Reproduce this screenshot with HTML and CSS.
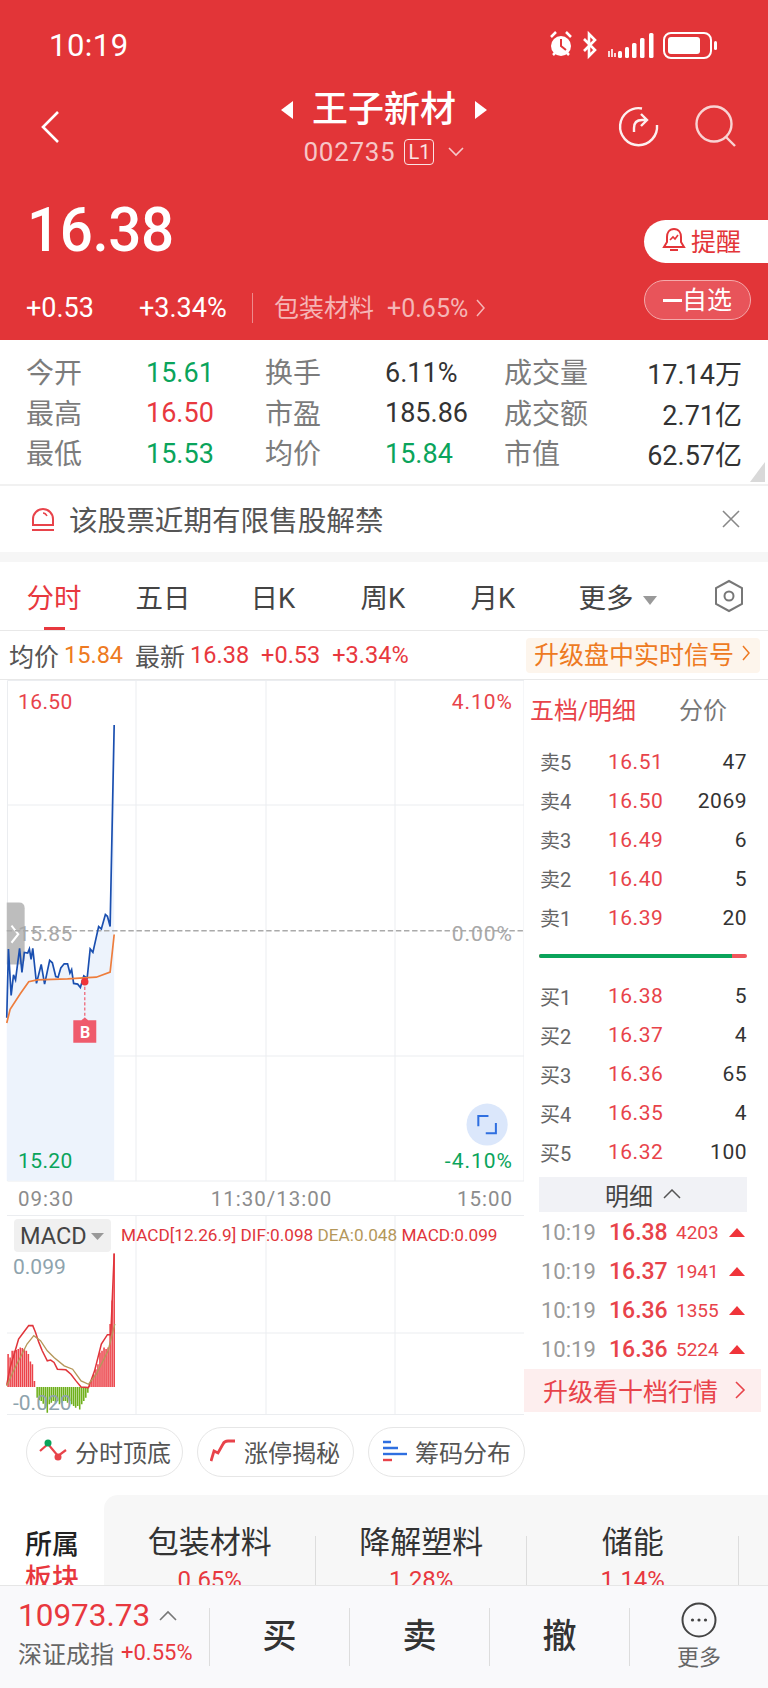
FILE: index.html
```html
<!DOCTYPE html>
<html lang="zh-CN">
<head>
    <meta charset="UTF-8">
    <title>王子新材</title>
    <link rel="stylesheet" href="styles.css">
</head>
<body>
<div class="page">
    <header class="hero">
        <div class="status">
            <span class="status-time">10:19</span>
            <svg class="status-icons" width="172" height="32" viewBox="0 0 172 32">
                <circle cx="12" cy="17" r="10" fill="#fff"/>
                <path d="M12 10v7l5 4" fill="none" stroke="#e33539" stroke-width="2"/>
                <path d="M2 8l5-5M22 8l-5-5M4 26l3-3M20 26l-3-3" stroke="#fff" stroke-width="2.5" fill="none"/>
                <path d="M35 10l11 11-6 6V5l6 6-11 11" fill="none" stroke="#fff" stroke-width="2.6"/>
                <path d="M60 22v6M63 20v8M66 24v4" stroke="#fff" stroke-width="1.6"/>
                <rect x="69" y="22" width="4" height="7" rx="1.5" fill="#fff"/>
                <rect x="76" y="18" width="4" height="11" rx="1.5" fill="#fff"/>
                <rect x="83" y="14" width="4.5" height="15" rx="1.5" fill="#fff"/>
                <rect x="91" y="9" width="4.5" height="20" rx="1.5" fill="#fff"/>
                <rect x="100" y="4" width="4.5" height="25" rx="1.5" fill="#fff"/>
                <rect x="115" y="4" width="47" height="25" rx="7" fill="none" stroke="#fff" stroke-width="2"/>
                <rect x="119" y="8" width="32" height="17" rx="3" fill="#fff"/>
                <rect x="165" y="12" width="3" height="9" rx="1.5" fill="#fff"/>
            </svg>
        </div>
        <nav class="nav">
            <svg class="back" width="20" height="34" viewBox="0 0 20 34"><path d="M18 2L3 17l15 15" fill="none" stroke="#fff" stroke-width="2.6"/></svg>
            <div class="title">
                <div class="title-name"><i class="arrow-left"></i><span>王子新材</span><i class="arrow-right"></i></div>
                <div class="title-code">
                    <span>002735</span><b class="level">L1</b>
                    <svg width="16" height="10" viewBox="0 0 16 10"><path d="M1 1l7 7 7-7" fill="none" stroke="#f5c9ca" stroke-width="1.6"/></svg>
                </div>
            </div>
            <div class="nav-icons">
                <svg width="44" height="44" viewBox="0 0 44 44">
                    <path d="M25 3.5A18.5 18.5 0 1 0 40 20" fill="none" stroke="#fdf0f0" stroke-width="2.4"/>
                    <path d="M17 27v-4c0-5 3-8 8-8h4M24 9l6 6-6 6" fill="none" stroke="#fdf0f0" stroke-width="2.4"/>
                </svg>
                <svg width="44" height="44" viewBox="0 0 44 44">
                    <circle cx="20" cy="19" r="17.5" fill="none" stroke="#f9d3d3" stroke-width="2.4"/>
                    <path d="M32 32l9 9" stroke="#f9d3d3" stroke-width="2.4"/>
                </svg>
            </div>
        </nav>
        <div class="quote">
            <div class="quote-main">
                <div class="price">16.38</div>
                <div class="change">
                    <span class="change-a">+0.53</span>
                    <span class="change-b">+3.34%</span>
                    <span class="sector-name">包装材料</span>
                    <span class="sector-pct">+0.65%</span>
                    <svg width="10" height="18" viewBox="0 0 10 18"><path d="M1 1l7 8-7 8" fill="none" stroke="#f5b5b6" stroke-width="1.5"/></svg>
                </div>
            </div>
            <div class="quote-side">
                <div class="pill-alert">
                    <svg width="24" height="26" viewBox="0 0 24 26">
                        <path d="M12 2c5 0 7 4 7 8v5l3 5H2l3-5v-5c0-4 2-8 7-8zM8 23h8" fill="none" stroke="#e33539" stroke-width="2"/>
                        <path d="M8 13l3-3 2 2 3-4" fill="none" stroke="#e33539" stroke-width="1.6"/>
                    </svg>
                    <span>提醒</span>
                </div>
                <div class="pill-add"><i></i><span>自选</span></div>
            </div>
        </div>
    </header>

    <section class="stats">
        <span class="k">今开</span><span class="v green">15.61</span><span class="k">换手</span><span class="v">6.11%</span><span class="k">成交量</span><span class="v end">17.14万</span>
        <span class="k">最高</span><span class="v red">16.50</span><span class="k">市盈</span><span class="v">185.86</span><span class="k">成交额</span><span class="v end">2.71亿</span>
        <span class="k">最低</span><span class="v green">15.53</span><span class="k">均价</span><span class="v green">15.84</span><span class="k">市值</span><span class="v end">62.57亿</span>
        <i class="stats-corner"></i>
    </section>

    <section class="notice">
        <svg width="26" height="26" viewBox="0 0 26 26">
            <path d="M3 19v-6a10 10 0 0 1 20 0v6zM2 24h22" fill="none" stroke="#e8434a" stroke-width="2"/>
            <path d="M13 7c2 0 3 1 4 3" fill="none" stroke="#e8434a" stroke-width="1.5"/>
        </svg>
        <span class="notice-text">该股票近期有限售股解禁</span>
        <svg class="notice-close" width="18" height="18" viewBox="0 0 18 18"><path d="M1 1l16 16M17 1L1 17" stroke="#888" stroke-width="1.6"/></svg>
    </section>

    <div class="band"></div>

    <section class="tabs">
        <span class="tab on">分时</span>
        <span class="tab">五日</span>
        <span class="tab">日K</span>
        <span class="tab">周K</span>
        <span class="tab">月K</span>
        <span class="tab tab-more">更多<i></i></span>
        <svg class="tab-gear" width="30" height="34" viewBox="0 0 30 34">
            <path d="M15 2l13 7v16l-13 7-13-7V9z" fill="none" stroke="#777" stroke-width="2"/>
            <circle cx="15" cy="17" r="4.5" fill="none" stroke="#777" stroke-width="2"/>
        </svg>
    </section>

    <section class="info">
        <span class="info-k">均价</span><span class="info-orange">15.84</span>
        <span class="info-k">最新</span><span class="info-red">16.38</span>
        <span class="info-red">+0.53</span><span class="info-red">+3.34%</span>
        <span class="info-badge">升级盘中实时信号<svg width="9" height="18" viewBox="0 0 9 18"><path d="M1 2l6 7-6 7" fill="none" stroke="#ee7a22" stroke-width="1.5"/></svg></span>
    </section>

    <section class="board">
        <div class="board-left">
            <svg class="price-chart" width="524" height="502" viewBox="0 0 524 502">
                <path d="M7.5 .5H524V501H7.5zM136 0v501M266 0v501M395 0v501M7 125h517M7 376h517" fill="none" stroke="#ebedf0" stroke-width="1"/>
                <g transform="translate(0 -10) scale(.3378 .3444)">
                    <path d="M20 1010L25 810 33 945 40 885 46 900 58 808 65 878 72 820 82 822 87 810 92 840 97 808 108 910 122 855 132 912 147 843 155 850 165 890 172 892 180 865 190 853 200 853 207 880 212 870 218 910 230 912 238 922 248 888 258 895 267 810 275 820 292 745 300 752 312 710 318 715 326 745 338 160V1483H20z" fill="#edf3fc"/>
                    <path d="M20 675h36q17 0 17 17v146q0 17-17 17H20z" fill="#bdbdbd"/>
                    <path d="M34 742l20 25-20 25" fill="none" stroke="#fff" stroke-width="6"/>
                    <path d="M20 757H1550" stroke="#aaa" stroke-width="4" stroke-dasharray="16 8" fill="none"/>
                    <path d="M20 1010L25 810 33 945 40 885 46 900 58 808 65 878 72 820 82 822 87 810 92 840 97 808 108 910 122 855 132 912 147 843 155 850 165 890 172 892 180 865 190 853 200 853 207 880 212 870 218 910 230 912 238 922 248 888 258 895 267 810 275 820 292 745 300 752 312 710 318 715 326 745 338 160" fill="none" stroke="#1a4fb0" stroke-width="5"/>
                    <path d="M20 1025L30 985 60 940 85 905 110 900 200 897 260 893 285 892 326 877 338 768" fill="none" stroke="#ee7d3c" stroke-width="5"/>
                    <path d="M251 905V1015" stroke="#ef5b6c" stroke-width="3.5" stroke-dasharray="9 6"/>
                    <circle cx="251" cy="905" r="11" fill="#f0343a"/>
                    <path d="M217 1017h24l10-8 10 8h24v65h-68z" fill="#ef5b6c"/>
                    <circle cx="1442" cy="1320" r="61" fill="#dbe7fb"/>
                    <path d="M1416 1325v-30h30M1468 1315v30h-30" fill="none" stroke="#2f6fe0" stroke-width="6"/>
                </g>
                <text x="85" y="358" class="chart-b" text-anchor="middle">B</text>
                <text x="18" y="29" class="chart-num red-fill">16.50</text>
                <text x="513" y="29" class="chart-pct red-fill" text-anchor="end">4.10%</text>
                <text x="18" y="261" class="chart-num gray-fill">15.85</text>
                <text x="513" y="261" class="chart-pct gray-fill" text-anchor="end">0.00%</text>
                <text x="18" y="488" class="chart-num green-fill">15.20</text>
                <text x="513" y="488" class="chart-pct green-fill" text-anchor="end">-4.10%</text>
            </svg>
            <div class="axis"><span>09:30</span><span class="axis-mid">11:30/13:00</span><span>15:00</span></div>
            <svg class="macd" width="524" height="200" viewBox="0 0 524 200">
                <path d="M7 .5H524M7 199.5H524M136 0v199M266 0v199M395 0v199M7 118h517" fill="none" stroke="#ebedf0" stroke-width="1"/>
                <rect x="14" y="4" width="97" height="33" rx="4" fill="#f0f0f0"/>
                <text x="20" y="29" class="macd-name">MACD</text>
                <path d="M91 18h13l-6.500 7z" fill="#999"/>
                <text x="121" y="26" class="macd-legend"><tspan fill="#e0353b">MACD[12.26.9] DIF:0.098 </tspan><tspan fill="#b5975a">DEA:0.048 </tspan><tspan fill="#e0353b">MACD:0.099</tspan></text>
                <text x="13" y="59" class="macd-num">0.099</text>
                <g transform="translate(0 -15) scale(.3378 .335)">
                    <path d="M24 558V460M30 558V470M36 558V450M42 558V450M48 558V448M54 558V445M60 558V440M66 558V442M72 558V445M78 558V450M84 558V460M90 558V482M96 558V490M102 558V540M266 558V550M272 558V535M278 558V520M284 558V505M290 558V490M296 558V455M302 558V450M308 558V440M314 558V445M320 558V440M326 558V370M332 558V300M338 558V160" stroke="#ec4249" stroke-width="4.600" fill="none"/>
                    <path d="M110 558V590M116 558V598M122 558V600M128 558V608M134 558V620M140 558V635M146 558V610M152 558V605M158 558V600M164 558V605M170 558V600M176 558V610M182 558V605M188 558V600M194 558V600M200 558V605M206 558V600M212 558V610M218 558V615M224 558V620M230 558V615M236 558V625M242 558V610M248 558V600M254 558V590M260 558V575" stroke="#6fb01c" stroke-width="4.600" fill="none"/>
                    <path d="M20 552L30 500 45 450 55 415 70 395 85 375 97 375 105 395 115 425 125 450 140 480 150 478 160 485 170 505 195 507 210 520 225 540 240 558 262 560 280 510 300 430 318 402 328 402 338 160" fill="none" stroke="#e0353b" stroke-width="4.500"/>
                    <path d="M20 555L40 510 60 470 80 430 100 405 120 420 140 450 160 470 190 495 215 505 240 540 262 550 285 520 320 450 340 370" fill="none" stroke="#b5975a" stroke-width="4"/>
                </g>
                <text x="13" y="195" class="macd-num">-0.020</text>
            </svg>
        </div>
        <div class="board-right">
            <div class="depth-head"><span class="depth-on">五档/明细</span><span class="depth-off">分价</span></div>
            <div class="depth-row"><span>卖5</span><b>16.51</b><em>47</em></div>
            <div class="depth-row"><span>卖4</span><b>16.50</b><em>2069</em></div>
            <div class="depth-row"><span>卖3</span><b>16.49</b><em>6</em></div>
            <div class="depth-row"><span>卖2</span><b>16.40</b><em>5</em></div>
            <div class="depth-row"><span>卖1</span><b>16.39</b><em>20</em></div>
            <div class="depth-bar"><i></i></div>
            <div class="depth-row"><span>买1</span><b>16.38</b><em>5</em></div>
            <div class="depth-row"><span>买2</span><b>16.37</b><em>4</em></div>
            <div class="depth-row"><span>买3</span><b>16.36</b><em>65</em></div>
            <div class="depth-row"><span>买4</span><b>16.35</b><em>4</em></div>
            <div class="depth-row"><span>买5</span><b>16.32</b><em>100</em></div>
            <div class="detail-head">明细<svg width="18" height="10" viewBox="0 0 18 10"><path d="M1 9l8-8 8 8" fill="none" stroke="#555" stroke-width="1.5"/></svg></div>
            <div class="tick"><span>10:19</span><b>16.38</b><em>4203</em><i></i></div>
            <div class="tick"><span>10:19</span><b>16.37</b><em>1941</em><i></i></div>
            <div class="tick"><span>10:19</span><b>16.36</b><em>1355</em><i></i></div>
            <div class="tick"><span>10:19</span><b>16.36</b><em>5224</em><i></i></div>
            <div class="upgrade"><span>升级看十档行情</span><svg width="11" height="20" viewBox="0 0 11 20"><path d="M1 2l8 8-8 8" fill="none" stroke="#e8434a" stroke-width="1.600"/></svg></div>
        </div>
    </section>

    <section class="tools">
        <span class="tool">
            <svg width="28" height="24" viewBox="0 0 28 24">
                <path d="M1 12l8-7 10 12 8-6" fill="none" stroke="#e8434a" stroke-width="2.200"/>
                <circle cx="9" cy="4" r="3.500" fill="#0aa45b"/><circle cx="19" cy="18" r="3.500" fill="#e8434a"/>
            </svg>分时顶底</span>
        <span class="tool">
            <svg width="26" height="24" viewBox="0 0 26 24"><path d="M1 22l3-10 4 2 5-9c1-2 3-3 5-3h7" fill="none" stroke="#e8434a" stroke-width="2.800"/></svg>涨停揭秘</span>
        <span class="tool">
            <svg width="26" height="24" viewBox="0 0 26 24"><path d="M2 3h8M2 9h15" stroke="#2f6fe0" stroke-width="2.400"/><path d="M2 15h24" stroke="#2f6fe0" stroke-width="2.400"/><path d="M2 21h9" stroke="#e8434a" stroke-width="2.400"/></svg>筹码分布</span>
    </section>

    <section class="sectors">
        <div class="sectors-title"><span>所属</span><span class="sectors-red">板块</span></div>
        <div class="sectors-panel">
            <div class="sector"><div>包装材料</div><b>0.65%</b></div>
            <div class="sector"><div>降解塑料</div><b>1.28%</b></div>
            <div class="sector"><div>储能</div><b>1.14%</b></div>
        </div>
    </section>

    <footer class="bottom">
        <div class="index">
            <div class="index-top"><span>10973.73</span><svg width="18" height="11" viewBox="0 0 18 11"><path d="M1 10l8-8 8 8" fill="none" stroke="#777" stroke-width="1.600"/></svg></div>
            <div class="index-sub"><span>深证成指</span><b>+0.55%</b></div>
        </div>
        <div class="action">买</div>
        <div class="action">卖</div>
        <div class="action">撤</div>
        <div class="action-more">
            <svg width="36" height="36" viewBox="0 0 36 36">
                <circle cx="18" cy="18" r="16.500" fill="none" stroke="#444" stroke-width="2"/>
                <circle cx="11.500" cy="18" r="1.600" fill="#444"/><circle cx="18" cy="18" r="1.600" fill="#444"/><circle cx="24.500" cy="18" r="1.600" fill="#444"/>
            </svg>
            <span>更多</span>
        </div>
    </footer>
</div>
</body>
</html>
```
FILE: styles.css
```css
* {
    margin: 0;
    padding: 0;
    box-sizing: border-box;
}

body {
    font-family: Roboto, "Noto Sans CJK SC", sans-serif;
    background: #fff;
    color: #333;
}

em, i {
    font-style: normal;
}

b {
    font-weight: 400;
}

.page {
    width: 768px;
    height: 1688px;
    overflow: hidden;
}

/* red head */
.hero {
    height: 340px;
    background: #e23538;
    color: #fff;
}

.status {
    height: 90px;
    display: flex;
    align-items: center;
    justify-content: space-between;
    padding: 0 47px 0 49px;
}

.status-time {
    font-size: 31px;
    letter-spacing: .5px;
}

.nav {
    height: 86px;
    position: relative;
    display: flex;
    justify-content: center;
}

.back {
    position: absolute;
    left: 40px;
    top: 20px;
}

.title {
    text-align: center;
}

.title-name {
    display: flex;
    align-items: center;
    justify-content: center;
    gap: 19px;
    font-size: 36px;
    line-height: 44px;
    font-weight: 500;
    margin-top: -2px;
}

.arrow-left, .arrow-right {
    width: 0;
    height: 0;
    border-top: 9px solid transparent;
    border-bottom: 9px solid transparent;
}

.arrow-left {
    border-right: 12px solid #fff;
}

.arrow-right {
    border-left: 12px solid #fff;
}

.title-code {
    display: flex;
    align-items: center;
    justify-content: center;
    gap: 9px;
    font-size: 26px;
    line-height: 30px;
    margin-top: 5px;
    color: #f6c6c7;
    letter-spacing: .7px;
}

.level {
    border: 1.5px solid #fbe3e3;
    border-radius: 4px;
    color: #fbe3e3;
    font-size: 20px;
    line-height: 24px;
    letter-spacing: 0;
    padding: 0 3px;
    margin-right: 5px;
}

.nav-icons {
    position: absolute;
    right: 30px;
    top: 15px;
    display: flex;
    gap: 33px;
}

.quote {
    display: flex;
    justify-content: space-between;
    height: 164px;
}

.price {
    font-size: 62px;
    line-height: 70px;
    font-weight: 500;
    margin: 19px 0 0 27px;
    letter-spacing: -.4px;
    transform: scaleX(.94);
    transform-origin: left;
}

.change {
    display: flex;
    align-items: center;
    height: 36px;
    margin: 25px 0 0 26px;
    font-size: 27px;
}

.change-a {
    width: 113px;
}

.change-b {
    width: 114px;
    border-right: 1px solid #ee8a8c;
    line-height: 30px;
}

.sector-name {
    color: #f5b5b6;
    margin: 0 0 4px 21px;
    font-size: 25px;
}

.sector-pct {
    color: #f5b5b6;
    margin: 0 8px 0 13px;
    font-size: 25px;
}

.quote-side {
    display: flex;
    flex-direction: column;
    align-items: flex-end;
}

.pill-alert {
    margin-top: 44px;
    width: 124px;
    height: 43px;
    background: #fff;
    color: #e33539;
    border-radius: 22px 0 0 22px;
    display: flex;
    align-items: center;
    gap: 5px;
    padding: 0 0 3px 18px;
    font-size: 25px;
}

.pill-add {
    margin: 17px 17px 0 0;
    width: 107px;
    height: 40px;
    border: 1px solid #f4a9aa;
    border-radius: 20px;
    background: #e8545a;
    display: flex;
    align-items: center;
    padding: 0 0 4px 18px;
    gap: 0;
    font-size: 25px;
}

.pill-add i {
    width: 19px;
    height: 3px;
    background: #fff;
    margin-top: 4px;
}

/* numbers */
.stats {
    position: relative;
    height: 146px;
    padding: 11px 26px 0;
    display: grid;
    grid-template-columns: 120px 119px 120px 119px auto 1fr;
    grid-auto-rows: 40.500px;
    align-items: center;
    border-bottom: 2px solid #f1f1f1;
}

.k {
    font-size: 28px;
    color: #7c7c7c;
}

.v {
    font-size: 27px;
    padding-top: 3px;
    color: #333;
}

.end {
    text-align: right;
}

.green {
    color: #0aa45b;
}

.red {
    color: #e8383e;
}

.stats-corner {
    position: absolute;
    right: 3px;
    bottom: 2px;
    width: 15px;
    height: 20px;
    background: #d9d9d9;
    clip-path: polygon(100% 0, 100% 100%, 0 100%);
}

.notice {
    height: 66px;
    display: flex;
    align-items: center;
    padding: 0 28px 1px 30px;
}

.notice-text {
    margin-left: 13px;
    font-size: 28.600px;
    color: #555;
}

.notice-close {
    margin-left: auto;
}

.band {
    height: 10px;
    background: #f6f6f6;
}

/* tabs */
.tabs {
    position: relative;
    height: 69px;
    display: grid;
    grid-template-columns: 108px repeat(5, 110px) 1fr;
    align-items: center;
    border-bottom: 1px solid #e8e8e8;
}

.tab {
    position: relative;
    height: 68px;
    padding-top: 5px;
    text-align: center;
    font-size: 27.500px;
    line-height: 63px;
    color: #444;
}

.tab.on {
    color: #e8383e;
}

.tab.on::after {
    content: "";
    position: absolute;
    left: 44px;
    bottom: 0;
    width: 21px;
    height: 3px;
    background: #e8383e;
}

.tab-more {
    padding-left: 29px;
    white-space: nowrap;
}

.tab-more i {
    display: inline-block;
    margin-left: 9px;
    vertical-align: 3px;
    border-top: 9px solid #999;
    border-left: 7px solid transparent;
    border-right: 7px solid transparent;
}

.tab-gear {
    justify-self: end;
    margin-right: 24px;
}

.info {
    height: 49px;
    display: flex;
    align-items: center;
    padding: 0 8px 0 9px;
    font-size: 23.500px;
    border-bottom: 1px solid #e8e8e8;
}

.info-k {
    font-size: 25px;
    color: #555;
    margin-right: 5px;
}

.info-orange {
    color: #ee7a22;
    margin-right: 12px;
}

.info-red {
    color: #e8383e;
    margin-right: 12px;
}

.info-badge {
    margin-left: auto;
    width: 234px;
    flex: none;
    height: 35px;
    padding: 0 0 5px 8px;
    display: flex;
    align-items: center;
    gap: 8px;
    border-radius: 4px;
    background: #fdf5ec;
    color: #ee7a22;
    font-size: 25px;
    white-space: nowrap;
}

/* chart + depth */
.board {
    height: 735px;
    display: flex;
}

.board-left {
    width: 524px;
}

.price-chart, .macd {
    display: block;
}

.chart-num, .chart-pct {
    font-size: 21px;
    font-family: Roboto, sans-serif;
    letter-spacing: .4px;
}

.chart-pct {
    letter-spacing: 1px;
}

.chart-b {
    font-size: 16px;
    font-weight: 700;
    fill: #fff;
    font-family: Roboto, sans-serif;
}

.red-fill {
    fill: #e8434a;
}

.green-fill {
    fill: #0aa45b;
}

.gray-fill {
    fill: #a8a8a8;
}

.axis {
    height: 33px;
    padding: 0 11px 0 18px;
    display: flex;
    align-items: center;
    justify-content: space-between;
    font-size: 20.500px;
    letter-spacing: 1px;
    color: #8c8c8c;
}

.axis-mid {
    margin-left: 12px;
}

.macd-name {
    font-size: 23.500px;
    fill: #444;
    font-family: Roboto, sans-serif;
}

.macd-legend {
    font-size: 17.200px;
    font-family: Roboto, sans-serif;
}

.macd-num {
    font-size: 21px;
    fill: #8ea3ad;
    font-family: Roboto, sans-serif;
}

.board-right {
    width: 244px;
    font-size: 21px;
}

.depth-head {
    height: 62px;
    display: flex;
    align-items: center;
    padding: 0 0 6px 6px;
    font-size: 24px;
}

.depth-on {
    color: #e8434a;
    width: 149px;
}

.depth-off {
    color: #777;
}

.depth-row {
    height: 39px;
    display: grid;
    grid-template-columns: 68px 1fr auto;
    align-items: center;
    padding: 0 21px 0 16px;
}

.depth-row span {
    color: #666;
    font-size: 20px;
}

.depth-row b {
    color: #e8434a;
    letter-spacing: .5px;
}

.depth-row em {
    color: #333;
    letter-spacing: .5px;
}

.depth-bar {
    height: 4px;
    margin: 17px 21px 18.500px 15px;
    background: #f0555b;
    border-radius: 2px;
    overflow: hidden;
}

.depth-bar i {
    display: block;
    width: 93%;
    height: 4px;
    background: #0aa45b;
}

.detail-head {
    height: 35px;
    margin: 5px 21px 1px 15px;
    background: #f1f2f6;
    display: flex;
    align-items: center;
    justify-content: center;
    gap: 10px;
    font-size: 24px;
    color: #444;
}

.tick {
    height: 39px;
    display: flex;
    align-items: center;
    padding: 0 22px 0 17px;
    font-size: 22px;
}

.tick span {
    width: 68px;
    color: #999;
}

.tick b {
    width: 67px;
    font-size: 23px;
    font-weight: 500;
    color: #e8434a;
}

.tick em {
    width: 53px;
    font-size: 19px;
    color: #e8434a;
}

.tick i {
    border-bottom: 9px solid #f0343a;
    border-left: 8px solid transparent;
    border-right: 8px solid transparent;
}

.upgrade {
    height: 43px;
    width: 237px;
    background: #fdeeee;
    display: flex;
    align-items: center;
    justify-content: space-between;
    padding: 0 15px 0 19px;
    font-size: 25px;
    color: #e8434a;
}

/* tool chips */
.tools {
    height: 80px;
    padding: 12px 0 0 26px;
    display: flex;
    gap: 14px;
}

.tool {
    width: 157px;
    height: 50px;
    border: 1px solid #e6e6e6;
    border-radius: 25px;
    display: flex;
    align-items: center;
    gap: 8px;
    padding: 0 0 2px 12px;
    font-size: 24px;
    color: #555;
}

/* sectors */
.sectors {
    height: 90px;
    display: flex;
    overflow: hidden;
}

.sectors-title {
    width: 104px;
    padding: 33px 0 0 25px;
    display: flex;
    flex-direction: column;
    font-size: 27px;
    line-height: 34px;
    font-weight: 500;
    color: #222;
}

.sectors-red {
    color: #e8383e;
}

.sectors-panel {
    flex: 1;
    display: flex;
    background: #f7f7f7;
    border-radius: 14px 0 0 0;
}

.sector {
    position: relative;
    width: 211.500px;
    text-align: center;
    padding-top: 26px;
    font-size: 31px;
    line-height: 44px;
    color: #333;
}

.sector::after {
    content: "";
    position: absolute;
    right: 0;
    top: 41px;
    bottom: 0;
    width: 1px;
    background: #ddd;
}

.sector b {
    display: block;
    font-size: 24px;
    line-height: 30px;
    color: #e8383e;
}

/* bottom bar */
.bottom {
    height: 103px;
    display: flex;
    align-items: center;
    position: relative;
    background: #f9f9fb;
    border-top: 1px solid #e6e6e6;
}

.index {
    width: 210px;
    height: 58px;
    padding-left: 18px;
    border-right: 1px solid #ddd;
}

.index-top {
    display: flex;
    align-items: center;
    gap: 9px;
    height: 28px;
    margin-top: -7px;
    font-size: 31.500px;
    color: #e8383e;
}

.index-sub {
    display: flex;
    align-items: center;
    gap: 7px;
    height: 36px;
    font-size: 24px;
    color: #666;
    margin-top: 5px;
    white-space: nowrap;
}

.index-sub b {
    font-size: 22px;
    color: #e8383e;
}

.action {
    width: 140px;
    height: 58px;
    text-align: center;
    font-size: 34px;
    line-height: 56px;
    font-weight: 500;
    color: #333;
    border-right: 1px solid #ddd;
}

.action-more {
    flex: 1;
    display: flex;
    flex-direction: column;
    align-items: center;
    font-size: 22px;
    color: #666;
    line-height: 30px;
}

.action-more span {
    margin-top: 5px;
}
```
